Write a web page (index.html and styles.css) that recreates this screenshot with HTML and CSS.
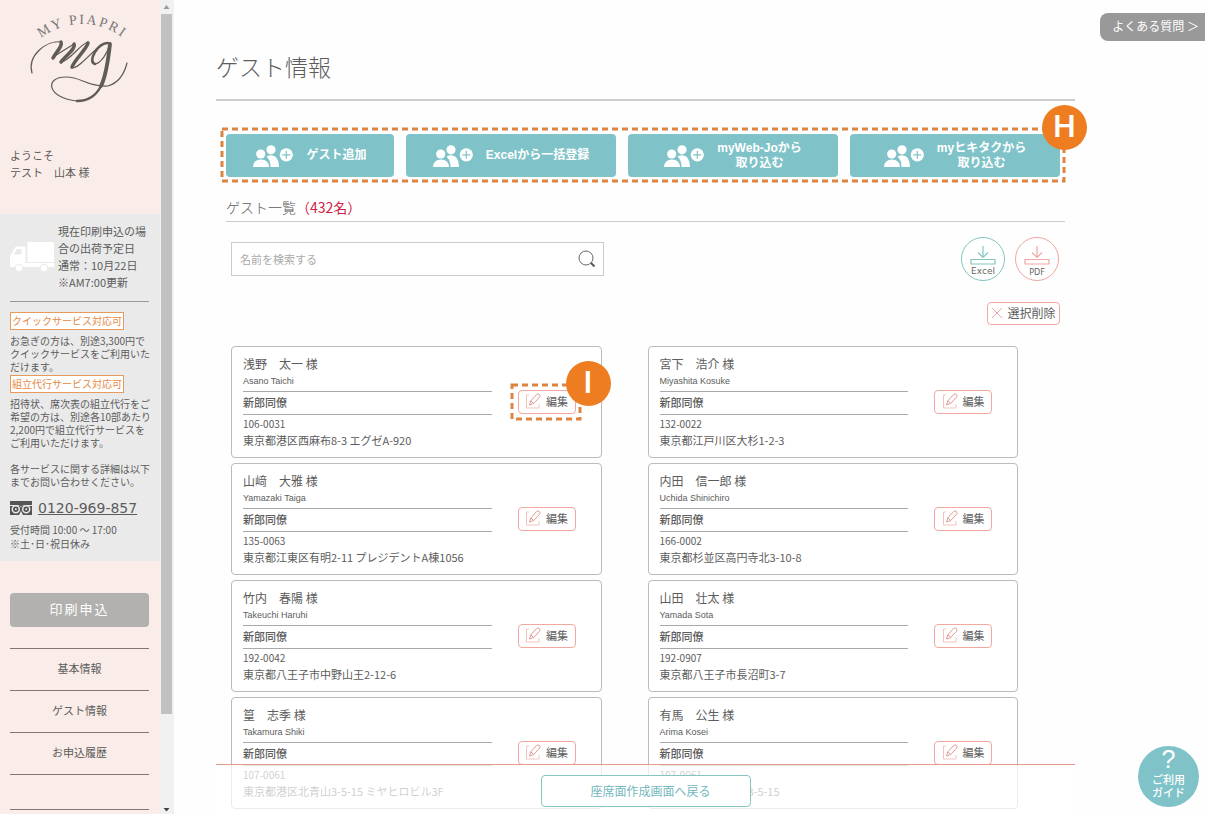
FILE: index.html
```html
<!DOCTYPE html>
<html lang="ja">
<head>
<meta charset="utf-8">
<title>ゲスト情報</title>
<link rel="stylesheet" href="styles.css">
</head>
<body>
<svg class="defs" aria-hidden="true">
  <symbol id="people" viewBox="0 0 40 22">
    <circle cx="18" cy="4.8" r="4.6" fill="#fff"/>
    <path d="M13.5 11.5Q16 10.2 18.5 10.2Q26 10.8 26 22H17.5Q17.5 15 13.500 11.500Z" fill="#fff"/>
    <circle cx="7.700" cy="9" r="4.600" fill="#fff"/>
    <path d="M0 22Q.5 14.500 8 14.500T16 22Z" fill="#fff"/>
    <circle cx="33.300" cy="9.800" r="6.600" fill="#fff"/>
    <path d="M33.300 5.800V13.800M29.300 9.800H37.300" stroke="#7fc3c9" stroke-width="1.200"/>
  </symbol>
  <symbol id="pencil" viewBox="0 0 16 16">
    <path d="M4 2H1.500V15H14V11" fill="none" stroke="#f3c3bb" stroke-width="1"/>
    <path d="M4.500 12L5.800 7.800L11.600 1.500Q13 .3 14.400 1.500Q15.700 2.800 14.500 4.300L8.700 10.500ZM5.800 7.800L8.700 10.500" fill="none" stroke="#e59a92" stroke-width="1" stroke-linejoin="round"/>
  </symbol>
  <symbol id="download" viewBox="0 0 26 20">
    <path d="M13 0V11M8 6.500L13 11.500L18 6.500M1 13.500H25V18H1Z" fill="none" stroke="currentColor" stroke-width="1.200"/>
  </symbol>
</svg>

<aside class="sidebar">
  <div class="side-body">
    <div class="intro">
      <svg class="logo" viewBox="0 0 120 100" role="img" aria-label="MY PIAPRI">
        <path id="arc" d="M19 50A67 67 0 0 1 125 50" fill="none"/>
        <text class="logo-text"><textPath href="#arc" startOffset="50%" text-anchor="middle">MY PIAPRI</textPath></text>
        <g fill="none" stroke="#5f5b57" stroke-linecap="round" stroke-linejoin="round">
          <path stroke-width="1.200" d="M22 73C17 55 37 40 51 42M43 57L64 44M51 62C60 61 69 45 78 42M62 68C72 68 84 45 99 43M85 64C91 63 97 54 100 44M67 101C37 98 34 77 56 77C72 77 77 87 98 86C108 83 114 75 117 63"/>
          <path stroke-width="3.500" d="M51 42C53 46 46 52 43 58M64 44C66 49 55 56 51 62M78 43C76 50 65 59 62 67"/>
          <path stroke-width="2.600" d="M98 43C88 42 77 62 85 64"/>
          <path stroke-width="3.800" d="M100 44C98 62 96 76 91 86"/>
          <path stroke-width="2.400" d="M91 86C85 98 76 101 67 101"/>
        </g>
      </svg>
      <p class="welcome">ようこそ<br>テスト　山本 様</p>
    </div>
    <section class="notice">
      <div class="ship">
        <svg class="truck" viewBox="0 0 44 30" aria-hidden="true">
          <path fill="#fff" d="M17.500 0H44V20H17.500ZM0 14Q1 13 5 5.500Q6 4.500 8 4.500H15.500V21H44V25H0Z"/>
          <path fill="#e9e9e9" d="M3.500 12.500L7 7H11.500V12.500Z"/>
          <circle cx="9" cy="26" r="3.800" fill="#fff" stroke="#e9e9e9"/><circle cx="34" cy="26" r="3.800" fill="#fff" stroke="#e9e9e9"/>
        </svg>
        <p>現在印刷申込の場<br>合の出荷予定日<br>通常：10月22日<br>※AM7:00更新</p>
      </div>
      <span class="tag">クイックサービス対応可</span>
      <p class="small">お急ぎの方は、別途3,300円で<br>クイックサービスをご利用いた<br>だけます。</p>
      <span class="tag">組立代行サービス対応可</span>
      <p class="small">招待状、席次表の組立代行をご<br>希望の方は、別途各10部あたり<br>2,200円で組立代行サービスを<br>ご利用いただけます。<br><br>各サービスに関する詳細は以下<br>までお問い合わせください。</p>
      <div class="phone">
        <svg viewBox="0 0 22 14" aria-hidden="true">
          <path fill="#555" d="M0 0H22V14H0Z"/><path fill="#e9e9e9" d="M0 4H6Q11 4 11 7Q11 4 16 4H22V5H0Z"/>
          <g fill="#555" stroke="#e9e9e9" stroke-width="1.500"><circle cx="5.800" cy="8.300" r="3.500"/><circle cx="16.200" cy="8.300" r="3.500"/></g>
          <path fill="#e9e9e9" d="M9 14L11 10L13 14Z"/><circle cx="5.800" cy="8.300" r="1" fill="#e9e9e9"/><circle cx="16.200" cy="8.300" r="1" fill="#e9e9e9"/>
        </svg>
        <a href="tel:0120969857">0120-969-857</a>
      </div>
      <p class="small hours">受付時間 10:00 ～ 17:00<br>※土･日･祝日休み</p>
    </section>
    <button class="print" type="button">印刷申込</button>
    <nav class="menu">
      <a href="#">基本情報</a>
      <a href="#">ゲスト情報</a>
      <a href="#">お申込履歴</a>
      <span class="menu-end"></span>
    </nav>
  </div>
  <div class="scroll" aria-hidden="true">
    <svg viewBox="0 0 14 14"><path d="M3.500 9H9.500L6.500 5Z" fill="#999"/></svg>
    <span class="thumb"></span>
    <svg class="down" viewBox="0 0 14 14"><path d="M3.500 8H9.500L6.500 11.500Z" fill="#444"/></svg>
  </div>
</aside>

<main class="main">
  <h1>ゲスト情報</h1>
  <div class="content">
    <div class="actions">
      <button type="button"><svg><use href="#people"/></svg><span>ゲスト追加</span></button>
      <button type="button"><svg><use href="#people"/></svg><span>Excelから一括登録</span></button>
      <button type="button"><svg><use href="#people"/></svg><span>myWeb-Joから<br>取り込む</span></button>
      <button type="button"><svg><use href="#people"/></svg><span>myヒキタクから<br>取り込む</span></button>
      <svg class="dash"><rect width="100%" height="100%"/></svg>
      <span class="badge">H</span>
    </div>
    <h2>ゲスト一覧<span>（432名）</span></h2>
    <div class="tools">
      <form class="search">
        <input type="text" placeholder="名前を検索する" aria-label="名前を検索する">
        <button type="button" aria-label="検索"><svg viewBox="0 0 18 18"><circle cx="8" cy="8" r="7" fill="none" stroke="#666"/><path d="M13 13L16.500 16.500" stroke="#555" stroke-width="2"/></svg></button>
      </form>
      <div class="exports">
        <button class="excel" type="button"><svg><use href="#download"/></svg><span>Excel</span></button>
        <button class="pdf" type="button"><svg><use href="#download"/></svg><span>PDF</span></button>
      </div>
    </div>
    <div class="bulk"><button class="delete" type="button"><svg viewBox="0 0 12 12"><path d="M1 1L11 11M11 1L1 11" stroke="#e8a9a4"/></svg>選択削除</button></div>
    <div class="cards">
      <article class="card"><div class="info"><h3>浅野　太一 様</h3><p class="roman">Asano Taichi</p><p class="group">新郎同僚</p><p class="zip">106-0031</p><p class="addr">東京都港区西麻布8-3 エグゼA-920</p></div>
        <div class="edit-wrap"><button class="edit" type="button"><svg><use href="#pencil"/></svg>編集</button><svg class="dash"><rect width="100%" height="100%"/></svg><span class="badge">I</span></div></article>
      <article class="card"><div class="info"><h3>宮下　浩介 様</h3><p class="roman">Miyashita Kosuke</p><p class="group">新郎同僚</p><p class="zip">132-0022</p><p class="addr">東京都江戸川区大杉1-2-3</p></div>
        <button class="edit" type="button"><svg><use href="#pencil"/></svg>編集</button></article>
      <article class="card"><div class="info"><h3>山﨑　大雅 様</h3><p class="roman">Yamazaki Taiga</p><p class="group">新郎同僚</p><p class="zip">135-0063</p><p class="addr">東京都江東区有明2-11 プレジデントA棟1056</p></div>
        <button class="edit" type="button"><svg><use href="#pencil"/></svg>編集</button></article>
      <article class="card"><div class="info"><h3>内田　信一郎 様</h3><p class="roman">Uchida Shinichiro</p><p class="group">新郎同僚</p><p class="zip">166-0002</p><p class="addr">東京都杉並区高円寺北3-10-8</p></div>
        <button class="edit" type="button"><svg><use href="#pencil"/></svg>編集</button></article>
      <article class="card"><div class="info"><h3>竹内　春陽 様</h3><p class="roman">Takeuchi Haruhi</p><p class="group">新郎同僚</p><p class="zip">192-0042</p><p class="addr">東京都八王子市中野山王2-12-6</p></div>
        <button class="edit" type="button"><svg><use href="#pencil"/></svg>編集</button></article>
      <article class="card"><div class="info"><h3>山田　壮太 様</h3><p class="roman">Yamada Sota</p><p class="group">新郎同僚</p><p class="zip">192-0907</p><p class="addr">東京都八王子市長沼町3-7</p></div>
        <button class="edit" type="button"><svg><use href="#pencil"/></svg>編集</button></article>
      <article class="card"><div class="info"><h3>篁　志季 様</h3><p class="roman">Takamura Shiki</p><p class="group">新郎同僚</p><p class="zip">107-0061</p><p class="addr">東京都港区北青山3-5-15 ミヤヒロビル3F</p></div>
        <button class="edit" type="button"><svg><use href="#pencil"/></svg>編集</button></article>
      <article class="card"><div class="info"><h3>有馬　公生 様</h3><p class="roman">Arima Kosei</p><p class="group">新郎同僚</p><p class="zip">107-0061</p><p class="addr">東京都港区北青山3-5-15</p></div>
        <button class="edit" type="button"><svg><use href="#pencil"/></svg>編集</button></article>
    </div>
  </div>
  <footer class="bottom"><a href="#">座席面作成画面へ戻る</a></footer>
</main>

<a class="faq" href="#">よくある質問 ＞</a>
<a class="guide" href="#"><span class="mark">?</span>ご利用<br>ガイド</a>
</body>
</html>
```

FILE: styles.css
```css
* { box-sizing: border-box; }
body {
  margin: 0;
  height: 100vh;
  display: flex;
  overflow: hidden;
  position: relative;
  background: #fefefe;
  color: #5c5c5c;
  font-family: "Noto Sans CJK JP", sans-serif;
}
p, h1, h2, h3 { margin: 0; font-weight: 400; }
a { color: inherit; text-decoration: none; }
button { font: inherit; color: inherit; padding: 0; cursor: pointer; }
svg { display: block; flex: none; }
.defs { position: absolute; width: 0; height: 0; }

/* Sidebar */
.sidebar { flex: none; width: 174px; display: flex; overflow: hidden; }
.side-body { flex: 1; min-width: 0; background: #faece8; white-space: nowrap; }
.intro { height: 214px; padding: 0 10px; }
.logo { width: 120px; height: 100px; overflow: visible; }
.logo-text { font-family: "Liberation Serif", serif; font-size: 14px; letter-spacing: 2px; fill: #777; }
.welcome { margin-top: 47px; font-size: 11px; line-height: 17px; }
.notice { height: 347px; padding: 9px 11px 0 10px; background: #eaeaea; }
.ship {
  display: flex;
  align-items: center;
  gap: 4px;
  padding-bottom: 10px;
  margin-bottom: 10px;
  border-bottom: 1px solid #999;
  font-size: 11px;
  line-height: 17px;
}
.truck { width: 44px; height: 30px; }
.tag {
  display: table;
  padding: 0 1px;
  border: 1px solid #e89a5d;
  background: #fff;
  color: #e58a48;
  font-size: 10px;
  line-height: 16px;
}
.small { font-size: 10px; line-height: 13px; margin: 4px 0 2px; }
.phone { display: flex; align-items: center; gap: 6px; margin-top: 10px; line-height: 20px; }
.phone svg { width: 22px; height: 14px; }
.phone a { font-family: "DejaVu Sans", sans-serif; font-size: 14px; text-decoration: underline; }
.hours { margin-top: 5px; line-height: 14px; }
.print {
  display: block;
  width: 139px;
  height: 34px;
  margin: 32px 10px 21px;
  padding-bottom: 3px;
  border: 0;
  border-radius: 4px;
  background: #b2b1af;
  color: #fff;
  font-size: 13px;
  letter-spacing: 2px;
}
.menu { margin: 0 11px 0 10px; border-top: 1px solid #827573; }
.menu a { display: block; padding-bottom: 3px; border-bottom: 1px solid #827573; font-size: 11px; line-height: 38px; text-align: center; }
.menu-end { display: block; height: 35px; border-bottom: 1px solid #827573; }
.scroll { flex: none; width: 14px; background: #f1f1f1; display: flex; flex-direction: column; }
.scroll svg { width: 14px; height: 14px; }
.thumb { width: 11px; margin-left: 1px; flex: 0 0 86%; background: #c1c1c1; }
.scroll .down { margin-top: auto; }

/* Main column */
.main { flex: 1; min-width: 0; padding: 0 131px 0 42px; position: relative; }
h1 { height: 101px; padding-top: 48px; border-bottom: 2px solid #ccc; font-size: 23px; font-weight: 300; line-height: 36px; }
.content { padding: 33px 10px 0; }
.actions {
  position: relative;
  display: grid;
  grid-template-columns: 168fr 210fr 210fr 210fr;
  gap: 12px;
  margin-right: 5px;
}
.actions button {
  display: flex;
  align-items: center;
  justify-content: center;
  gap: 13px;
  height: 43px;
  border: 0;
  border-radius: 4px;
  background: #7fc3c9;
  color: #fff;
  font: 700 12px/15px "Liberation Sans", "Noto Sans CJK JP", sans-serif;
}
.actions button svg { width: 40px; height: 22px; }
.dash { position: absolute; overflow: visible; pointer-events: none; }
.dash rect { fill: none; stroke: #dc8440; stroke-width: 3px; stroke-dasharray: 6px 4px; }
.actions .dash { left: -4px; top: -5px; width: calc(100% + 8px); height: 52px; }
.badge {
  position: absolute;
  width: 45px;
  height: 45px;
  border-radius: 50%;
  background: #ee7d22;
  color: #fff;
  font: 600 30px/43px "Inter", sans-serif;
  text-align: center;
}
.actions .badge { right: -27px; top: -29px; }
h2 { margin-top: 20px; height: 25px; border-bottom: 1px solid #ccc; font-size: 14px; font-weight: 300; line-height: 20px; }
h2 span { color: #cf1e45; font-weight: 400; }
.tools { display: flex; justify-content: space-between; align-items: center; margin-top: 15px; padding: 0 6px 0 5px; }
.search { display: flex; width: 373px; height: 34px; border: 1px solid #ccc; background: #fff; }
.search input { flex: 1; min-width: 0; border: 0; padding: 0 8px; background: none; font: 11px "Noto Sans CJK JP", sans-serif; outline: 0; }
.search input::placeholder { color: #aaa; }
.search button { border: 0; background: none; padding: 0 7px; }
.search svg { width: 18px; height: 18px; }
.exports { display: flex; gap: 10px; }
.exports button {
  width: 44px;
  height: 44px;
  border: 1px solid;
  border-radius: 50%;
  background: #fff;
  display: flex;
  flex-direction: column;
  align-items: center;
  padding-top: 8px;
}
.exports svg { width: 26px; height: 20px; }
.exports span { color: #666; font: 9px/10px "DejaVu Sans", sans-serif; }
.exports .pdf span { font-size: 8px; line-height: 13px; }
.excel { color: #83c6c0; }
.pdf { color: #efa6a4; }
.bulk { display: flex; justify-content: flex-end; margin-top: 21px; padding-right: 5px; }
.delete, .edit {
  display: flex;
  align-items: center;
  justify-content: center;
  border: 1px solid #f0a8a0;
  border-radius: 4px;
  background: #fff;
  white-space: nowrap;
}
.delete { gap: 4px; width: 73px; height: 23px; padding-bottom: 2px; font-size: 12px; }
.delete svg { width: 12px; height: 12px; }
.cards { display: grid; grid-template-columns: 1fr 1fr; gap: 5px 46px; margin-top: 21px; padding: 0 47px 0 5px; }
.card {
  display: flex;
  align-items: center;
  gap: 26px;
  padding: 8px 25px 8px 11px;
  border: 1px solid #bbb;
  border-radius: 4px;
  background: #fff;
  white-space: nowrap;
}
.info { flex: 1; min-width: 0; }
h3 { font-size: 12px; line-height: 18px; }
.roman { height: 19px; border-bottom: 1px solid #aaa; font: 9px/16px "Liberation Sans", sans-serif; }
.group { height: 23px; border-bottom: 1px solid #aaa; font-size: 11px; font-weight: 500; line-height: 20px; }
.zip { margin-top: 1px; font-size: 10px; line-height: 16px; }
.addr { padding-bottom: 1px; font-size: 11px; line-height: 16px; }
.edit { gap: 5px; width: 58px; height: 24px; padding-bottom: 2px; font-size: 11px; }
.edit svg { width: 16px; height: 16px; }
.edit-wrap { position: relative; }
.edit-wrap .dash { left: -6px; top: -5px; width: 68px; height: 34px; }
.edit-wrap .badge { left: 48px; top: -29px; }

/* Overlays pinned to the window */
.bottom {
  position: absolute;
  left: 42px;
  right: 131px;
  bottom: 0;
  height: 50px;
  padding-top: 10px;
  border-top: 1px solid #e39c8b;
  background: rgba(255, 255, 255, .7);
  display: flex;
  justify-content: center;
  align-items: flex-start;
}
.bottom a {
  width: 210px;
  padding-left: 10px;
  border: 1px solid #86c5be;
  border-radius: 4px;
  background: #fff;
  color: #72b7bd;
  font-size: 12px;
  line-height: 30px;
  text-align: center;
}
.faq {
  position: absolute;
  right: 1px;
  top: 13px;
  padding: 0 6px 2px 12px;
  border-radius: 8px 0 0 8px;
  background: #999;
  color: #fff;
  font-size: 12px;
  line-height: 26px;
}
.guide {
  position: absolute;
  right: 7px;
  bottom: 7px;
  width: 61px;
  height: 61px;
  border-radius: 50%;
  background: #7fc3c9;
  color: #fff;
  font-size: 11px;
  font-weight: 500;
  line-height: 13px;
  text-align: center;
}
.mark { display: block; font: 25px/27px "Liberation Sans", sans-serif; }
```
